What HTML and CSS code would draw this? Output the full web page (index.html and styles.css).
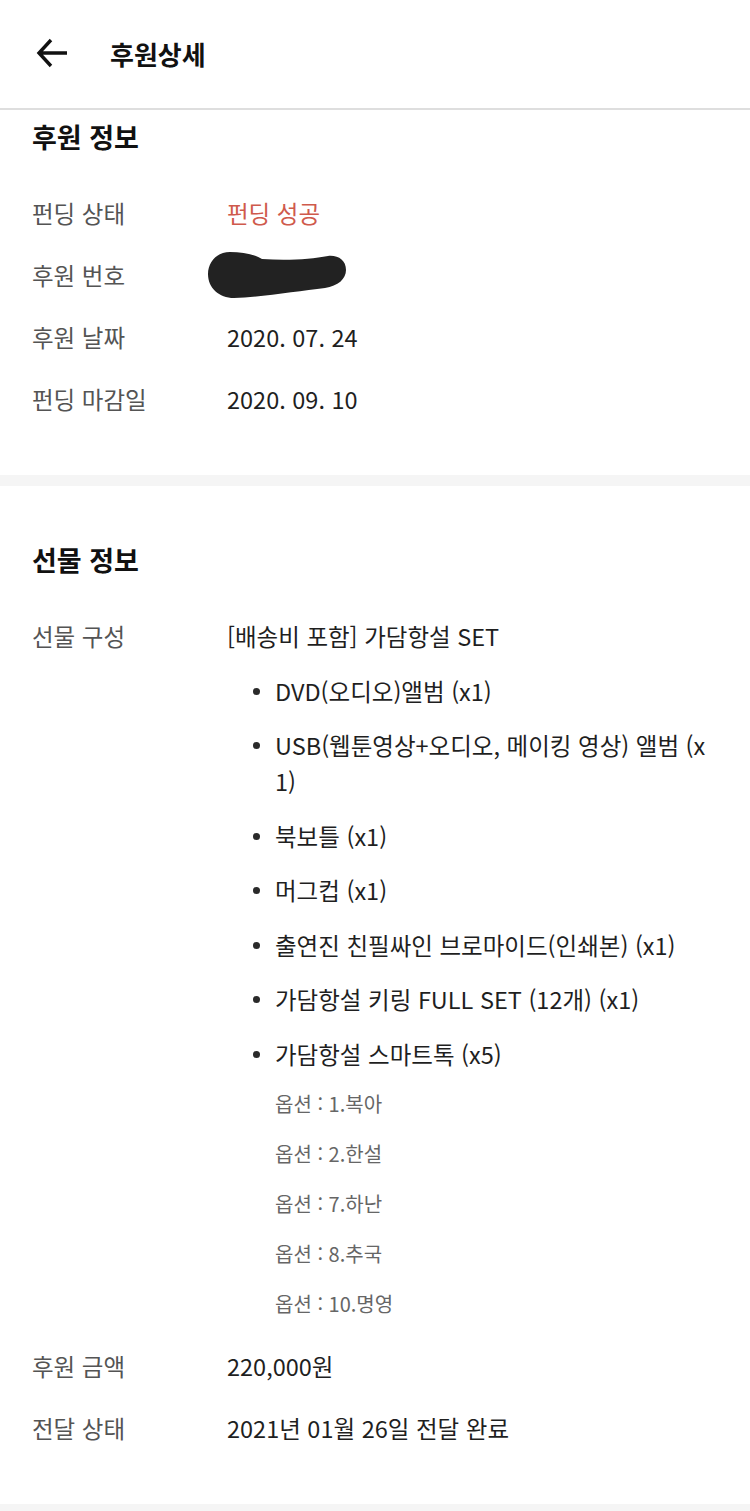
FILE: index.html
```html
<!DOCTYPE html>
<html lang="ko">
<head>
<meta charset="utf-8">
<title>후원상세</title>
<link rel="stylesheet" href="styles.css">
</head>
<body>
<header class="topbar">
  <span class="back" aria-label="뒤로">
    <svg width="34" height="34" viewBox="0 0 34 34"><path d="M31 15H4M15 2L3 15L15 28" fill="none" stroke="#111" stroke-width="3.4" stroke-linecap="butt" stroke-linejoin="miter"/></svg>
  </span>
  <h1 class="title">후원상세</h1>
</header>

<section class="panel">
  <h2 class="panel-title">후원 정보</h2>
  <div class="rows">
    <div class="row"><div class="label">펀딩 상태</div><div class="value value-red">펀딩 성공</div></div>
    <div class="row"><div class="label">후원 번호</div><div class="value">
      <svg class="blot" width="140" height="48" viewBox="0 0 140 48"><path d="M23 1C10 1 1 11 1 23C1 37 12 47 27 47C55 46 92 40 118 37C131 35 139 28 139 19C139 9 131 4 121 5C104 8 82 10 55 8C47 3 35 1 23 1Z" fill="#222"/></svg>
    </div></div>
    <div class="row"><div class="label">후원 날짜</div><div class="value">2020. 07. 24</div></div>
    <div class="row"><div class="label">펀딩 마감일</div><div class="value">2020. 09. 10</div></div>
  </div>
</section>

<div class="band"></div>

<section class="panel">
  <h2 class="panel-title">선물 정보</h2>
  <div class="rows">
    <div class="row">
      <div class="label">선물 구성</div>
      <div class="value">
        <div>[배송비 포함] 가담항설 SET</div>
        <ul class="items">
          <li><span>DVD(오디오)앨범 (x1)</span></li>
          <li><span>USB(웹툰영상+오디오, 메이킹 영상) 앨범 (x1)</span></li>
          <li><span>북보틀 (x1)</span></li>
          <li><span>머그컵 (x1)</span></li>
          <li><span>출연진 친필싸인 브로마이드(인쇄본) (x1)</span></li>
          <li><span>가담항설 키링 FULL SET (12개) (x1)</span></li>
          <li><span>가담항설 스마트톡 (x5)</span>
            <div class="options">
              <div>옵션 : 1.복아</div>
              <div>옵션 : 2.한설</div>
              <div>옵션 : 7.하난</div>
              <div>옵션 : 8.추국</div>
              <div>옵션 : 10.명영</div>
            </div>
          </li>
        </ul>
      </div>
    </div>
    <div class="row"><div class="label">후원 금액</div><div class="value">220,000원</div></div>
    <div class="row"><div class="label">전달 상태</div><div class="value">2021년 01월 26일 전달 완료</div></div>
  </div>
</section>

<div class="band"></div>
</body>
</html>
```

FILE: styles.css
```css
html, body {
  margin: 0;
  padding: 0;
  background: #fff;
}
body {
  font-family: "Noto Sans CJK KR", "Noto Sans", sans-serif;
  color: #1f1f1f;
}

.topbar {
  height: 108px;
  border-bottom: 2px solid #dedede;
  display: flex;
  align-items: center;
  padding-left: 36px;
}
.back {
  display: flex;
  width: 34px;
  height: 34px;
  margin-right: 40px;
  margin-top: 1px;
}
.title {
  margin: 0;
  font-size: 26px;
  font-weight: 700;
  line-height: 36px;
  color: #111;
}

.panel {
  padding: 9px 32px 57.5px 32px;
}
.panel + .band + .panel {
  padding-top: 56px;
}
.panel-title {
  margin: 0 0 40px 0;
  font-size: 27px;
  font-weight: 700;
  line-height: 36px;
  color: #111;
}

.band {
  height: 11px;
  background: #f5f5f5;
}

.rows {
  display: flex;
  flex-direction: column;
  gap: 26px;
}
.row {
  display: grid;
  grid-template-columns: 195px 1fr;
  font-size: 23.5px;
  line-height: 36px;
}
.label {
  color: #545454;
}
.value {
  color: #1f1f1f;
}
.value-red {
  color: #cf5a4c;
}
.blot {
  display: block;
  margin: -6px 0 -6px -20px;
}

.items {
  list-style: none;
  margin: 19px 0 0 0;
  padding: 0;
  display: flex;
  flex-direction: column;
  gap: 18.5px;
}
.items li {
  display: grid;
  grid-template-columns: 48px 1fr;
  word-break: break-all;
}
.items li::before {
  content: "";
  width: 7px;
  height: 7px;
  border-radius: 50%;
  background: #2a2a2a;
  justify-self: end;
  margin-right: 15px;
  margin-top: 15px;
}
.options {
  grid-column: 2;
  margin-top: 17px;
  padding-bottom: 3.5px;
  display: flex;
  flex-direction: column;
  gap: 20px;
  font-size: 20px;
  line-height: 30px;
  color: #666;
}
```
